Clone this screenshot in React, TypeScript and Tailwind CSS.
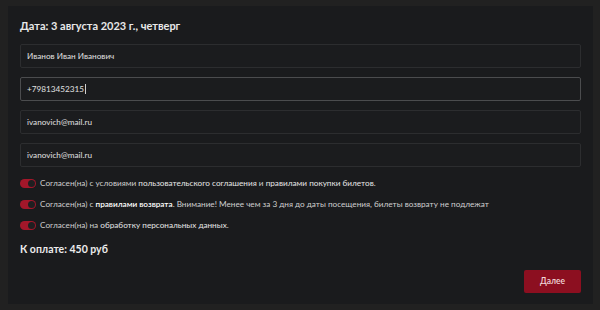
import { useState } from "react";

const font = { fontFamily: 'Lato, "Noto Sans", sans-serif' };

function Toggle({ on, onClick }: { on: boolean; onClick: () => void }) {
  return (
    <button
      onClick={onClick}
      className={`flex h-[9px] w-[16px] shrink-0 items-center rounded-full px-[1px] ${
        on ? "justify-end bg-[#a3172a]" : "justify-start bg-[#3a3a3c]"
      }`}
    >
      <span className="h-[7px] w-[7px] rounded-full bg-[#1f1f21]" />
    </button>
  );
}

export default function App() {
  const [agree, setAgree] = useState([true, true, true]);

  const flip = (i: number) => {
    setAgree(agree.map((v, j) => (j === i ? !v : v)));
  };

  const fields = [
    { value: "Иванов Иван Иванович", focus: false },
    { value: "+79813452315", focus: true },
    { value: "ivanovich@mail.ru", focus: false },
    { value: "ivanovich@mail.ru", focus: false },
  ];

  return (
    <div className="h-[310px] w-[600px] bg-[#212121] pl-[8px] pr-[7px] pt-[6px]" style={font}>
      <div className="flex h-[298px] flex-col bg-[#1a1b1d] px-[12px] pt-[12px]">
        {/* Заголовок */}
        <h1 className="text-[11px] font-bold leading-[16px] text-[#e8e8e8]">
          Дата: 3 августа 2023 г., четверг
        </h1>

        {/* Поля */}
        <div className="mt-[10px] flex flex-col gap-[9px]">
          {fields.map((f, i) => (
            <div
              key={i}
              className={`flex h-[24px] items-center rounded-[2px] border bg-[#1b1c1e] px-[6px] text-[8.2px] text-[#e0e0e0] ${
                f.focus ? "border-[#4b4c4e]" : "border-[#2c2d2f]"
              }`}
            >
              {f.value}
              {f.focus && <span className="ml-[1px] h-[10px] w-[1px] bg-[#d0d0d0]" />}
            </div>
          ))}
        </div>

        {/* Согласия */}
        <div className="mt-[12px] flex flex-col gap-[12px] text-[8.2px] leading-[9px] text-[#cfcfcf]">
          <div className="flex items-center gap-[4px]">
            <Toggle on={agree[0]} onClick={() => flip(0)} />
            <span>
              Согласен(на) с условиями <span className="text-[#e6e6e6]">пользовательского соглашения</span> и{" "}
              <span className="text-[#e6e6e6]">правилами покупки билетов</span>.
            </span>
          </div>
          <div className="flex items-center gap-[4px]">
            <Toggle on={agree[1]} onClick={() => flip(1)} />
            <span>
              Согласен(на) с <span className="font-semibold text-white">правилами возврата</span>. Внимание! Менее
              чем за 3 дня до даты посещения, билеты возврату не подлежат
            </span>
          </div>
          <div className="flex items-center gap-[4px]">
            <Toggle on={agree[2]} onClick={() => flip(2)} />
            <span>
              Согласен(на) на <span className="text-[#e6e6e6]">обработку персональных данных</span>.
            </span>
          </div>
        </div>

        <div className="mt-[12px] text-[10.5px] font-bold leading-[14px] text-[#ececec]">К оплате: 450 руб</div>

        <div className="mt-[14px] flex justify-end">
          <button className="h-[23px] w-[57px] rounded-[2px] bg-[#8c0f20] text-[8.5px] font-semibold text-[#f0d8da]">
            Далее
          </button>
        </div>
      </div>
    </div>
  );
}
